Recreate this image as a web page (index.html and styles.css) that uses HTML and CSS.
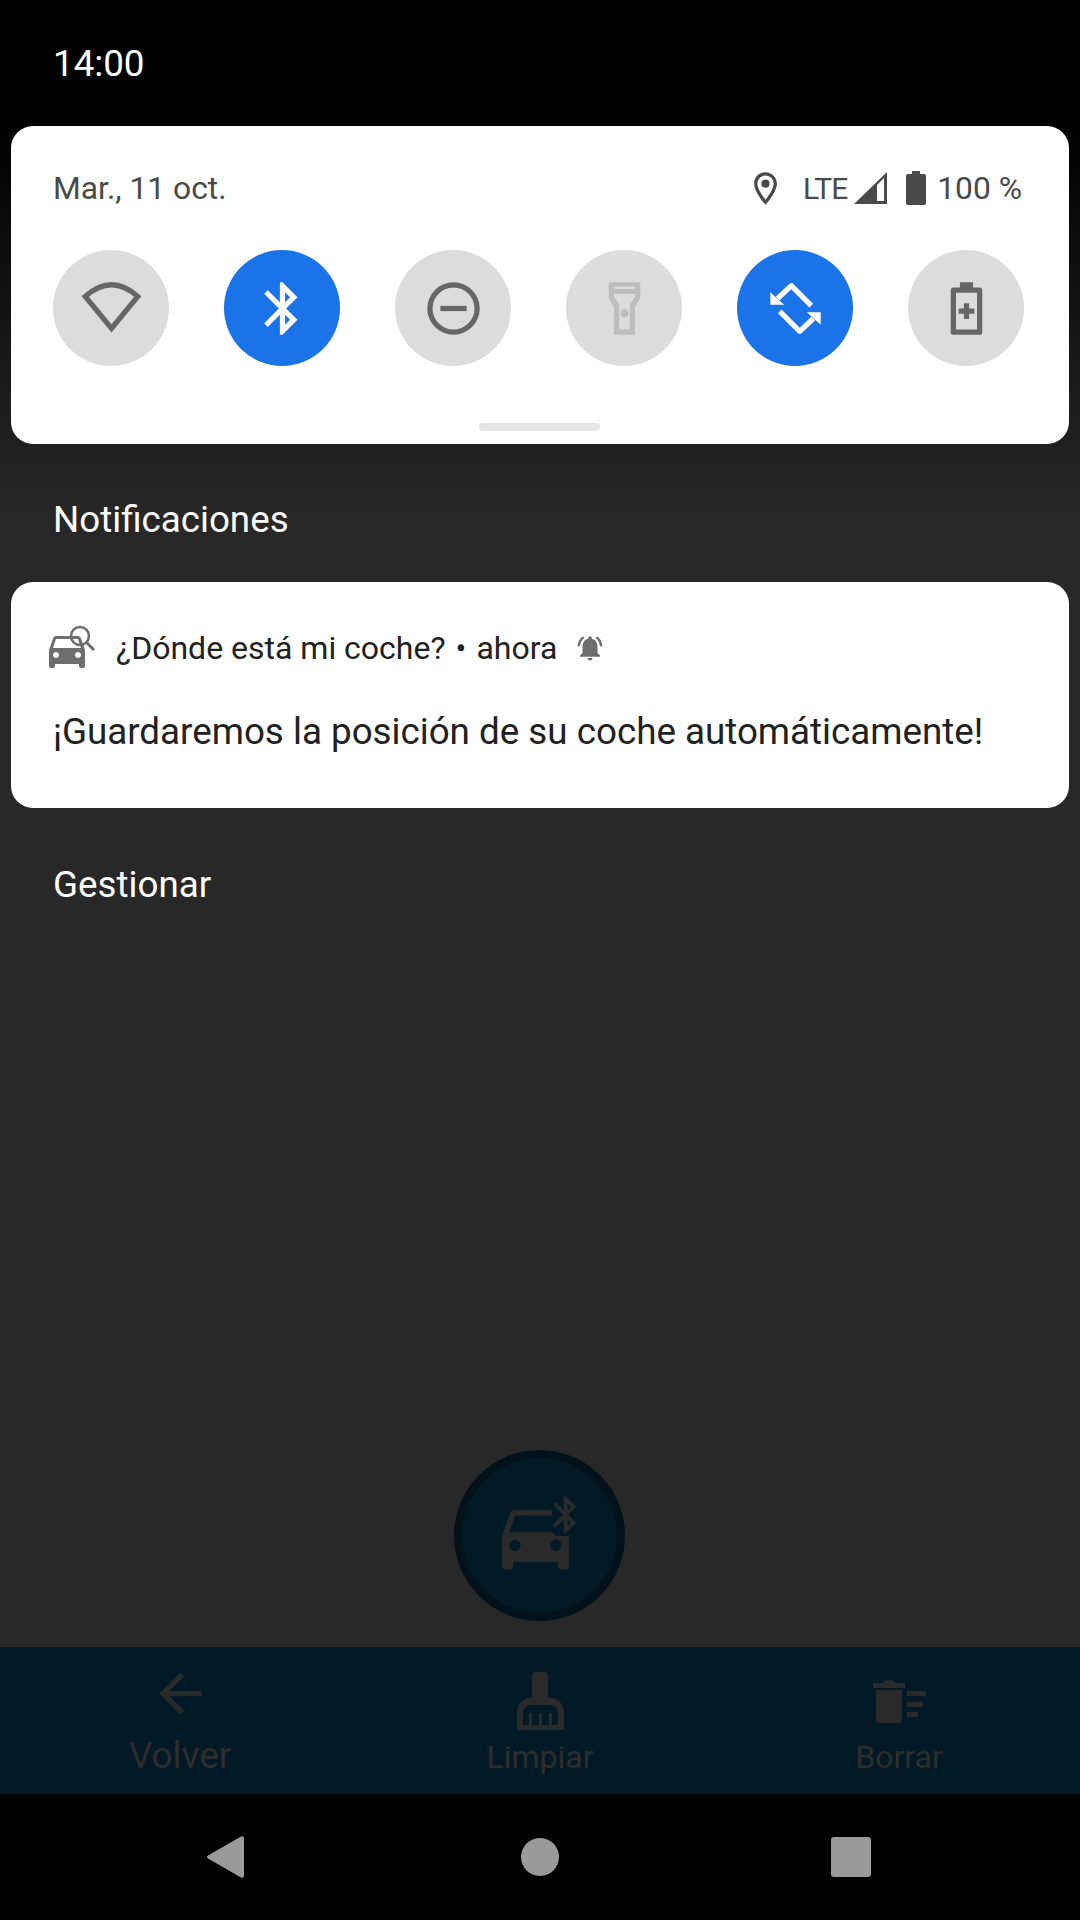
FILE: index.html
```html
<!DOCTYPE html>
<html lang="es">
<head>
  <meta charset="UTF-8">
  <meta name="viewport" content="width=device-width, initial-scale=1.0">
  <title>Notificaciones</title>
  <link rel="stylesheet" href="styles.css">
</head>
<body>
  <div class="screen">
    <div class="status-bar">14:00</div>

    <!-- Ajustes rapidos -->
    <section class="panel">
      <div class="panel-head">
        <span class="date">Mar., 11 oct.</span>
        <div class="sys-icons">
          <svg class="ic-pin" viewBox="0 0 24 24"><path d="M12 2C8.13 2 5 5.13 5 9c0 5.25 7 13 7 13s7-7.75 7-13c0-3.87-3.13-7-7-7zM7 9c0-2.76 2.24-5 5-5s5 2.24 5 5c0 2.88-2.88 7.19-5 9.88C9.92 16.21 7 11.85 7 9z"/><circle cx="12" cy="9" r="2.5"/></svg>
          <span class="lte">LTE</span>
          <svg class="ic-signal" viewBox="0 0 33 32"><path fill-rule="evenodd" d="M0 32 33 0V32zM23 13 30 6V29H23z"/></svg>
          <svg class="ic-battery" viewBox="0 0 20 34"><path d="M6 0h8v3h4a2 2 0 0 1 2 2v27a2 2 0 0 1-2 2H2a2 2 0 0 1-2-2V5a2 2 0 0 1 2-2h4z"/></svg>
          <span>100 %</span>
        </div>
      </div>
      <div class="tiles">
        <div class="tile">
          <svg class="tile-ic" viewBox="0 0 24 24"><path class="wifi-line" d="M12 19.6 2 7.4Q12-1.5 22 7.4Z"/></svg>
        </div>
        <div class="tile tile-on">
          <svg class="tile-ic" viewBox="0 0 24 24"><path d="M17.71 7.71L12 2h-1v7.59L6.41 5 5 6.41 10.59 12 5 17.59 6.41 19 11 14.41V22h1l5.71-5.71-4.3-4.29 4.3-4.29zM13 5.83l1.88 1.88L13 9.59V5.83zm1.88 10.46L13 18.17v-3.76l1.88 1.88z"/></svg>
        </div>
        <div class="tile">
          <svg class="tile-ic" viewBox="0 0 24 24"><path fill-rule="evenodd" d="M12 2a10 10 0 1 0 0 20 10 10 0 0 0 0-20zm0 2a8 8 0 1 1 0 16 8 8 0 0 1 0-16z"/><rect x="7" y="11" width="10" height="2"/></svg>
        </div>
        <div class="tile tile-off">
          <svg class="tile-ic" viewBox="0 0 24 24"><path fill-rule="evenodd" d="M6 2h12v6l-2 3.5V22H8V11.5L6 8zM8 3.6v1h8v-1zM8 6.4v1.2l2 3V20h4v-9.4l2-3V6.4z"/><circle cx="12" cy="13.8" r="1.5"/></svg>
        </div>
        <div class="tile tile-on">
          <svg class="tile-ic" viewBox="0 0 24 24">
            <g><path class="rotate-line" d="M5.200 8.200 10.400 3.300 18 10.900"/><path d="M2.400 5.800V10.600H7.700z"/></g>
            <g transform="rotate(180 12 12)"><path class="rotate-line" d="M5.200 8.200 10.400 3.300 18 10.900"/><path d="M2.400 5.800V10.600H7.700z"/></g>
          </svg>
        </div>
        <div class="tile">
          <svg class="tile-ic" viewBox="0 0 24 24"><path fill-rule="evenodd" d="M9.5 2h5v2H17a1 1 0 0 1 1 1v16a1 1 0 0 1-1 1H7a1 1 0 0 1-1-1V5a1 1 0 0 1 1-1h2.500zM8 6v14h8V6z"/><path d="M11 10h2v2h2v2h-2v2h-2v-2H9v-2h2z"/></svg>
        </div>
      </div>
      <div class="handle"></div>
    </section>

    <div class="shade-label label-first">Notificaciones</div>

    <!-- Notificacion de la app -->
    <section class="card">
      <div class="card-head">
        <svg class="ic-app" viewBox="0 0 50 46">
          <g transform="translate(-5 1) scale(2)"><path d="M18.92 6.01C18.72 5.42 18.16 5 17.5 5h-11c-.66 0-1.21.42-1.42 1.01L3 12v8c0 .55.45 1 1 1h1c.55 0 1-.45 1-1v-1h12v1c0 .55.45 1 1 1h1c.55 0 1-.45 1-1v-8l-2.08-5.99zM6.5 16c-.83 0-1.5-.67-1.5-1.5S5.67 13 6.5 13s1.5.67 1.5 1.5S7.33 16 6.5 16zm11 0c-.83 0-1.5-.67-1.5-1.5s.67-1.5 1.5-1.5 1.5.67 1.5 1.5-.67 1.5-1.5 1.5zM5 11l1.5-4.5h11L19 11H5z"/></g>
          <circle class="lens" cx="32" cy="11" r="9"/>
          <path class="lens-handle" d="M39 18 46 25"/>
        </svg>
        <span class="app-name">¿Dónde está mi coche?</span>
        <span class="dot">•</span>
        <span class="when">ahora</span>
        <svg class="ic-bell" viewBox="0 0 24 24"><path d="M7.58 4.08L6.15 2.65C3.75 4.48 2.17 7.3 2.03 10.5h2c.15-2.65 1.51-4.97 3.55-6.42zm12.39 6.42h2c-.15-3.2-1.73-6.02-4.12-7.85l-1.42 1.43c2.02 1.45 3.39 3.77 3.54 6.42zM18 11c0-3.07-1.64-5.64-4.5-6.32V4c0-.83-.67-1.5-1.5-1.5s-1.5.67-1.5 1.5v.68C7.63 5.36 6 7.92 6 11v5l-2 2v1h16v-1l-2-2v-5zm-6 11c.14 0 .27-.01.4-.04.65-.14 1.18-.58 1.44-1.18.1-.24.15-.5.15-.78h-4c.01 1.1.9 2 2.01 2z"/></svg>
      </div>
      <p class="card-text">¡Guardaremos la posición de su coche automáticamente!</p>
    </section>

    <div class="shade-label label-second">Gestionar</div>

    <div class="spacer"></div>

    <div class="fab">
      <svg class="ic-fab" viewBox="490 1490 100 90">
        <g transform="translate(490.8 1490.4) scale(3.72)"><path d="M18.92 6.01C18.72 5.42 18.16 5 17.5 5h-11c-.66 0-1.21.42-1.42 1.01L3 12v8c0 .55.45 1 1 1h1c.55 0 1-.45 1-1v-1h12v1c0 .55.45 1 1 1h1c.55 0 1-.45 1-1v-8l-2.08-5.99zM6.5 16c-.83 0-1.5-.67-1.5-1.5S5.67 13 6.5 13s1.5.67 1.5 1.5S7.33 16 6.5 16zm11 0c-.83 0-1.5-.67-1.5-1.5s.67-1.5 1.5-1.5 1.5.67 1.5 1.5-.67 1.5-1.5 1.5zM5 11l1.5-4.5h11L19 11H5z"/></g>
        <rect class="fab-cut" x="552" y="1496" width="30" height="39" rx="6"/>
        <g transform="translate(543.5 1491.5) scale(1.85)"><path d="M17.71 7.71L12 2h-1v7.59L6.41 5 5 6.41 10.59 12 5 17.59 6.41 19 11 14.41V22h1l5.71-5.71-4.3-4.29 4.3-4.29zM13 5.83l1.88 1.88L13 9.59V5.83zm1.88 10.46L13 18.17v-3.76l1.88 1.88z"/></g>
      </svg>
    </div>

    <!-- Barra inferior de la app, oscurecida -->
    <div class="app-bar">
      <div class="bar-item">
        <svg class="ic-back" viewBox="0 0 24 24"><path d="M20 11H7.83l5.59-5.59L12 4l-8 8 8 8 1.41-1.41L7.83 13H20v-2z"/></svg>
        <span class="bar-label label-big">Volver</span>
      </div>
      <div class="bar-item">
        <svg class="ic-broom" viewBox="0 0 47 58">
          <path fill-rule="evenodd" d="M0 58V40A14 14 0 0 1 14 26h1V4a4 4 0 0 1 4-4h8a4 4 0 0 1 4 4V26h2A14 14 0 0 1 47 40V58zM6 53H41V41a8 8 0 0 0-8-8H14a8 8 0 0 0-8 8z"/>
          <rect x="12" y="41" width="3" height="12"/><rect x="22" y="41" width="3" height="12"/><rect x="32" y="41" width="3" height="12"/>
        </svg>
        <span class="bar-label">Limpiar</span>
      </div>
      <div class="bar-item bar-item-last">
        <svg class="ic-trash" viewBox="0 0 53 43">
          <path d="M0 3h10q1-3 6-3t6 3h10v5H0zM3 10h26v30a3 3 0 0 1-3 3H6a3 3 0 0 1-3-3z"/>
          <rect x="34" y="11" width="19" height="5"/><rect x="34" y="22" width="16" height="5"/><rect x="34" y="32" width="11" height="5"/>
        </svg>
        <span class="bar-label">Borrar</span>
      </div>
    </div>

    <nav class="nav-bar">
      <svg class="nav-back" viewBox="0 0 37 42"><path d="M1 19.500 34 .600Q37-.600 37 2.500V39.500Q37 42.600 34 41.400L1 22.500Q-1 21 1 19.500z"/></svg>
      <div class="nav-home"></div>
      <div class="nav-recent"></div>
    </nav>
  </div>
</body>
</html>
```

FILE: styles.css
```css
* {
  box-sizing: border-box;
}
body {
  margin: 0;
  background-color: #000;
  font-family: 'Roboto', 'Noto Sans', sans-serif;
}
svg {
  display: block;
  flex-shrink: 0;
}
.screen {
  width: 1080px;
  height: 1920px;
  display: flex;
  flex-direction: column;
  background: linear-gradient(#000 0, #000 120px, #282828 520px);
}
.status-bar {
  height: 126px;
  padding: 41px 0 0 53px;
  color: #fff;
  font-size: 36.75px;
  line-height: 46px;
}

/* Panel de ajustes rapidos */
.panel {
  height: 318px;
  margin: 0 11px;
  padding: 40px 45px 0 42px;
  background-color: #fff;
  border-radius: 22px;
}
.panel-head {
  display: flex;
  justify-content: space-between;
  align-items: center;
  height: 44px;
  color: #4a4a4a;
  font-size: 31.8px;
}
.sys-icons {
  display: flex;
  align-items: center;
  margin-right: 2px;
  fill: #4a4a4a;
}
.ic-pin {
  width: 39px;
  height: 39px;
  margin-right: 18px;
}
.lte {
  margin-right: 7px;
  font-size: 30px;
  letter-spacing: -1px;
}
.ic-signal {
  width: 33px;
  height: 32px;
  margin-right: 19px;
}
.ic-battery {
  width: 20px;
  height: 34px;
  margin-right: 11px;
}
.tiles {
  display: flex;
  gap: 55px;
  margin-top: 40px;
}
.tile {
  display: flex;
  align-items: center;
  justify-content: center;
  width: 116px;
  height: 116px;
  border-radius: 50%;
  background-color: #dcdcdc;
  fill: #666;
}
.tile-on {
  background-color: #1a73e8;
  fill: #fff;
}
.tile-off {
  fill: #bdbdbd;
}
.tile-ic {
  width: 63px;
  height: 63px;
}
.wifi-line {
  fill: none;
  stroke: #666;
  stroke-width: 2;
}
.rotate-line {
  fill: none;
  stroke: #fff;
  stroke-width: 2;
  stroke-linejoin: round;
}
.handle {
  width: 121px;
  height: 8px;
  margin: 57px 0 0 426px;
  background-color: #e6e6e6;
  border-radius: 4px;
}

/* Textos sobre el fondo oscuro */
.shade-label {
  display: flex;
  align-items: center;
  padding-left: 53px;
  color: #fff;
  font-size: 36.75px;
}
.label-first {
  height: 138px;
  padding-top: 13px;
}
.label-second {
  height: 152px;
}

/* Tarjeta de notificacion */
.card {
  height: 226px;
  margin: 0 11px;
  padding: 43px 0 0 37px;
  background-color: #fff;
  border-radius: 22px;
}
.card-head {
  display: flex;
  align-items: center;
  height: 46px;
  color: #212121;
  font-size: 32px;
}
.ic-app {
  width: 50px;
  height: 46px;
  margin-right: 18px;
  fill: #6e6e6e;
}
.lens {
  fill: none;
  stroke: #6e6e6e;
  stroke-width: 2.5;
}
.lens-handle {
  fill: none;
  stroke: #6e6e6e;
  stroke-width: 3;
}
.dot {
  margin: 0 10px;
}
.ic-bell {
  width: 30px;
  height: 30px;
  margin-left: 18px;
  fill: #6e6e6e;
}
.card-text {
  margin: 39px 0 0 5px;
  color: #212121;
  font-size: 36.75px;
  line-height: 44px;
}
.spacer {
  flex: 1;
}

/* Boton flotante */
.fab {
  display: flex;
  align-items: center;
  justify-content: center;
  width: 171px;
  height: 171px;
  margin: 0 0 26px 454px;
  background-color: #011a26;
  border: 8px solid #03111a;
  border-radius: 50%;
  fill: #2a2a2a;
}
.ic-fab {
  width: 100px;
  height: 90px;
}
.fab-cut {
  fill: #011a26;
}

/* Barra inferior */
.app-bar {
  display: grid;
  grid-template-columns: repeat(3, 1fr);
  height: 147px;
  background-color: #011a26;
  fill: #2a2a2a;
  color: #2f2d2c;
}
.bar-item {
  display: flex;
  flex-direction: column;
  align-items: center;
  justify-content: flex-end;
  padding-bottom: 17px;
}
.bar-item-last {
  padding-right: 2px;
}
.bar-label {
  font-size: 32px;
  line-height: 40px;
}
.label-big {
  margin-bottom: 1px;
  font-size: 37px;
}
.ic-back {
  width: 63px;
  height: 63px;
  margin-bottom: 11px;
}
.ic-broom {
  width: 47px;
  height: 58px;
  margin-bottom: 7px;
}
.ic-trash {
  width: 53px;
  height: 43px;
  margin-bottom: 14px;
}

/* Navegacion del sistema */
.nav-bar {
  display: flex;
  align-items: center;
  height: 126px;
  padding-left: 207px;
  background-color: #000;
  fill: #9a9a9a;
}
.nav-back {
  width: 37px;
  height: 42px;
}
.nav-home {
  width: 38px;
  height: 38px;
  margin-left: 277px;
  border-radius: 50%;
  background-color: #9a9a9a;
}
.nav-recent {
  width: 40px;
  height: 40px;
  margin-left: 272px;
  border-radius: 3px;
  background-color: #9a9a9a;
}
```
